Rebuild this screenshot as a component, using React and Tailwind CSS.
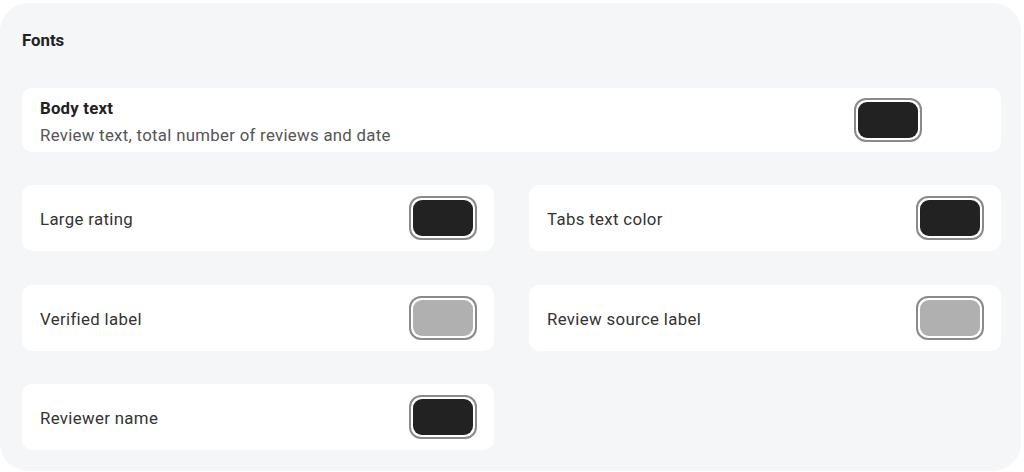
const rows = [
  [{ label: 'Large rating', color: 'bg-[#222222]' }, { label: 'Tabs text color', color: 'bg-[#222222]' }],
  [{ label: 'Verified label', color: 'bg-[#b0b0b0]' }, { label: 'Review source label', color: 'bg-[#b0b0b0]' }],
  [{ label: 'Reviewer name', color: 'bg-[#222222]' }],
];

function Swatch({ color }) {
  return (
    <div className="w-[68px] h-[44px] rounded-[12px] border-2 border-[#8a8a8a] bg-white p-[2px] shrink-0">
      <div className={`w-full h-full rounded-[9px] ${color}`} />
    </div>
  );
}

function ColorCard({ label, color }) {
  return (
    <div className="h-[66px] bg-white rounded-[10px] flex items-center justify-between pl-[18px] pr-[17px]">
      <span className="text-[16.8px] text-[#333] tracking-[0.35px] pt-[4px]">{label}</span>
      <Swatch color={color} />
    </div>
  );
}

export default function App() {
  return (
    <div className="w-[1024px] h-[472px] bg-white pt-[3px] overflow-hidden" style={{ fontFamily: 'Roboto, "Liberation Sans", sans-serif' }}>
      <div className="w-[1021px] h-[468px] bg-[#f5f6f8] rounded-[28px] pl-[22px] pr-[20px] pt-[27px]">
        <h2 className="text-[16.8px] font-bold text-[#222] leading-[20px]">Fonts</h2>

        <div className="mt-[38px] h-[64px] bg-white rounded-[10px] flex items-center pl-[18px] pr-[79px] justify-between">
          <div className="flex flex-col pt-[2px]">
            <span className="text-[16.8px] font-bold text-[#222] tracking-[0.2px] leading-[22px]">Body text</span>
            <span className="text-[16.8px] text-[#555] tracking-[0.3px] leading-[22px] mt-[5px]">Review text, total number of reviews and date</span>
          </div>
          <Swatch color="bg-[#222222]" />
        </div>

        <div className="mt-[33px] grid grid-cols-2 gap-x-[35px] gap-y-[33.5px]">
          {rows.flat().map(item => (
            <ColorCard key={item.label} label={item.label} color={item.color} />
          ))}
        </div>
      </div>
    </div>
  );
}
